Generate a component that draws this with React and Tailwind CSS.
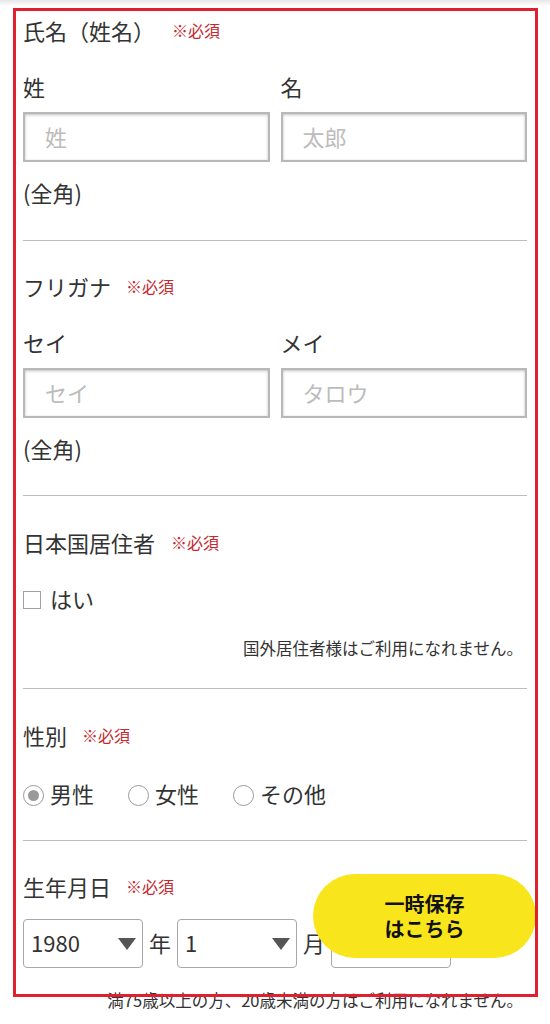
const Heading = ({ children, gap = 'ml-[15px]' }) => (
  <div className="flex items-center h-[30px] pb-[6px] text-[22px] leading-[24px]">
    <span>{children}</span>
    <span className={`${gap} text-[16px] text-[#c62a2f]`}>※必須</span>
  </div>
);

const TextBox = ({ placeholder }) => (
  <input
    type="text"
    placeholder={placeholder}
    className="w-full h-[50px] border-2 border-[#b8b8b8] bg-white pl-[20px] pb-[3px] text-[22px] placeholder:text-[#bcbcbc] shadow-[inset_0_1px_3px_rgba(0,0,0,0.25)] outline-none"
  />
);

const NameSection = ({ title, leftLabel, rightLabel, leftPh, rightPh, gap }) => (
  <section>
    <Heading gap={gap}>{title}</Heading>
    <div className="mt-[26px] grid grid-cols-2 gap-x-[11px]">
      <div className="h-[30px] pb-[6px] text-[22px] leading-[24px]">{leftLabel}</div>
      <div className="h-[30px] pb-[6px] text-[22px] leading-[24px]">{rightLabel}</div>
      <div className="mt-[8px]"><TextBox placeholder={leftPh} /></div>
      <div className="mt-[8px]"><TextBox placeholder={rightPh} /></div>
    </div>
    <div className="mt-[18px] h-[30px] pb-[6px] text-[22px] leading-[24px]">(全角)</div>
  </section>
);

const Radio = ({ label, checked }) => (
  <label className="flex items-center gap-[6px] text-[22px] leading-[30px]">
    <span className="flex h-[21px] w-[21px] items-center justify-center rounded-full border-[1.5px] border-[#9a9a9a]">
      {checked && <span className="h-[11px] w-[11px] rounded-full bg-[#9a9a9a]" />}
    </span>
    <span className="pb-[4px] leading-[26px]">{label}</span>
  </label>
);

const Select = ({ value }) => (
  <div className="flex h-[49px] w-[120px] items-center justify-between rounded-[4px] border border-[#a8a8a8] bg-white pl-[7px] pr-[6px] text-[22px]">
    <span className="pb-[3px]">{value}</span>
    {value && (
      <svg width="18" height="12" viewBox="0 0 18 12">
        <polygon points="0,0 18,0 9,12" fill="#555" />
      </svg>
    )}
  </div>
);

const Divider = () => <div className="h-px bg-[#bdbdbd]" />;

export default function App() {
  return (
    <div className="relative w-[550px] min-h-[1024px] overflow-hidden bg-white text-[#333] font-['Noto_Sans_CJK_JP','Noto_Sans',sans-serif]">
      <div className="h-[6px] bg-gradient-to-b from-[#e6e6e6] to-white" />
      <div className="px-[23px] pt-[12px]">
        <NameSection title="氏名（姓名）" leftLabel="姓" rightLabel="名" leftPh="姓" rightPh="太郎" gap="ml-[17px]" />
        <div className="mt-[30px]"><Divider /></div>

        <div className="mt-[33px]">
          <NameSection title="フリガナ" leftLabel="セイ" rightLabel="メイ" leftPh="セイ" rightPh="タロウ" gap="ml-[15px]" />
        </div>
        <div className="mt-[29px]"><Divider /></div>

        <section className="mt-[34px]">
          <Heading gap="ml-[16px]">日本国居住者</Heading>
          <label className="mt-[25px] flex h-[30px] items-center gap-[9px] text-[22px]">
            <span className="h-[18px] w-[18px] border border-[#a0a0a0] bg-white" />
            <span className="pb-[4px] leading-[26px]">はい</span>
          </label>
          <p className="mt-[22px] pr-[4px] pb-[2px] text-right text-[16.5px] leading-[22px]">国外居住者様はご利用になれません。</p>
        </section>
        <div className="mt-[27px]"><Divider /></div>

        <section className="mt-[34px]">
          <Heading gap="ml-[15px]">性別</Heading>
          <div className="mt-[27px] flex h-[30px] items-center gap-[34px]">
            <Radio label="男性" checked />
            <Radio label="女性" />
            <Radio label="その他" />
          </div>
        </section>
        <div className="mt-[30px]"><Divider /></div>

        <section className="mt-[33px]">
          <Heading gap="ml-[15px]">生年月日</Heading>
          <div className="mt-[15px] flex items-center gap-[6px] text-[22px]">
            <Select value="1980" />
            <span className="pb-[3px]">年</span>
            <Select value="1" />
            <span className="pb-[3px]">月</span>
            <Select value="" />
          </div>
          <p className="mt-[20px] pr-[4px] text-right text-[16.5px] leading-[24px]">満75歳以上の方、20歳未満の方はご利用になれません。</p>
        </section>
      </div>

      <button className="absolute left-[313px] top-[874px] flex h-[84px] w-[223px] flex-col items-center justify-center rounded-full bg-[#f8e51c] text-[20px] font-bold leading-[25px] text-[#111]">
        <span>一時保存</span>
        <span>はこちら</span>
      </button>

      <div className="pointer-events-none absolute left-[13px] top-[8px] h-[989px] w-[525px] border-[3px] border-[#e0202e]" />
    </div>
  );
}
